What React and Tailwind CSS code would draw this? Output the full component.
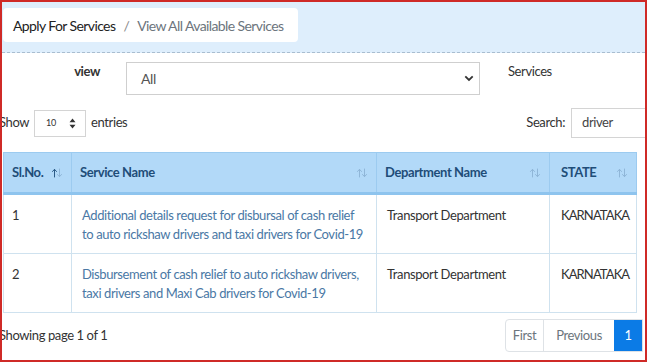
import React from "react";

const font = { fontFamily: "Lato, 'Open Sans', sans-serif" };

function SortIcon({ active }) {
  return (
    <svg width="12" height="10" viewBox="0 0 12 10" className="shrink-0">
      <g strokeWidth="1" fill="none" strokeLinecap="round" strokeLinejoin="round">
        <path d="M3.5 9V1.5M1.5 3.5L3.5 1.3L5.5 3.5" stroke={active ? "#2b5a86" : "#8fb6d8"} />
        <path d="M8.5 1V8.5M6.5 6.5L8.5 8.7L10.5 6.5" stroke="#8fb6d8" />
      </g>
    </svg>
  );
}

const rows = [
  {
    no: "1",
    name: "Additional details request for disbursal of cash relief to auto rickshaw drivers and taxi drivers for Covid-19",
    dept: "Transport Department",
    state: "KARNATAKA",
  },
  {
    no: "2",
    name: "Disbursement of cash relief to auto rickshaw drivers, taxi drivers and Maxi Cab drivers for Covid-19",
    dept: "Transport Department",
    state: "KARNATAKA",
  },
];

export default function App() {
  return (
    <div
      className="w-[647px] h-[362px] border-2 border-[#cf2a27] overflow-hidden bg-white text-[13px] tracking-[-0.4px] text-[#333]"
      style={font}
    >
      {/* breadcrumb band */}
      <div className="h-[51px] bg-[#deeefc] border-b border-dashed border-[#a9bdd0] pt-[6px] pl-[1px]">
        <div className="w-[295px] h-[34px] bg-white rounded-[4px] flex items-center pl-[10px] text-[14px] tracking-[-0.6px] whitespace-nowrap">
          <span className="text-[#222]">Apply For Services</span>
          <span className="text-[#888] mx-[8px]">/</span>
          <span className="text-[#6c757d]">View All Available Services</span>
        </div>
      </div>

      {/* filter row */}
      <div className="flex items-start mt-[9px]">
        <div className="w-[98px] text-right font-bold leading-[18px] text-[#333]">view</div>
        <div className="ml-[26px] w-[354px] h-[33px] border border-[#cfcfcf] flex items-center justify-between pl-[14px] pr-[5px] text-[14px] text-[#555]">
          <span>All</span>
          <svg width="10" height="7" viewBox="0 0 10 7">
            <path d="M1.3 1.3L5 5L8.7 1.3" stroke="#333" strokeWidth="1.8" fill="none" />
          </svg>
        </div>
        <div className="ml-[28px] leading-[18px] text-[#333]">Services</div>
      </div>

      {/* show / search row */}
      <div className="flex items-center justify-between mt-[13px] h-[30px]">
        <div className="flex items-center ml-[-3px]">
          <span>Show</span>
          <div className="ml-[5px] w-[52px] h-[27px] border border-[#d4d4d4] flex items-center justify-between pl-[11px] pr-[9px]">
            <span className="text-[9px] text-[#333]">10</span>
            <svg width="7" height="11" viewBox="0 0 7 11">
              <path d="M3.5 0.5L6.5 4.2H0.5Z M3.5 10.5L6.5 6.8H0.5Z" fill="#333" />
            </svg>
          </div>
          <span className="ml-[5px]">entries</span>
        </div>
        <div className="flex items-center mr-[-6px]">
          <span>Search:</span>
          <div className="ml-[6px] w-[80px] h-[30px] border border-[#d4d4d4] flex items-center pl-[10px] text-[#444]">
            driver
          </div>
        </div>
      </div>

      {/* table */}
      <table className="mt-[14px] ml-[1px] w-[633px] border-collapse table-fixed">
        <colgroup>
          <col className="w-[68px]" />
          <col className="w-[305px]" />
          <col className="w-[173px]" />
          <col className="w-[87px]" />
        </colgroup>
        <thead>
          <tr className="h-[41px] bg-[#b2d9f8] border-t border-[#9ccbf0] border-b-[3px] border-b-[#8ec4ee]">
            {[
              ["Sl.No.", true],
              ["Service Name", false],
              ["Department Name", false],
              ["STATE", false],
            ].map(([t, a]) => (
              <th
                key={t}
                className="border-x border-[#9ccbf0] px-[8px] text-left font-bold text-[#1f4d78]"
              >
                <div className="flex items-center justify-between">
                  <span className={t === "STATE" ? "ml-[3px]" : ""}>{t}</span>
                  <SortIcon active={a} />
                </div>
              </th>
            ))}
          </tr>
        </thead>
        <tbody>
          {rows.map((r, i) => (
            <tr key={r.no} className={i === 0 ? "h-[60px]" : "h-[59px]"}>
              <td className="border border-[#cfe2ef] align-top px-[8px] pt-[11px]">{r.no}</td>
              <td className="border border-[#cfe2ef] align-top px-[10px] pt-[11px] leading-[19px] text-[#4a78a5]">
                {r.name}
              </td>
              <td className="border border-[#cfe2ef] align-top px-[10px] pt-[11px] whitespace-nowrap">{r.dept}</td>
              <td className="border border-[#cfe2ef] align-top px-[11px] pt-[11px] whitespace-nowrap tracking-[-0.9px]">{r.state}</td>
            </tr>
          ))}
        </tbody>
      </table>

      {/* footer */}
      <div className="flex items-center justify-between mt-[6px]">
        <span className="ml-[-3px]">Showing page 1 of 1</span>
        <div className="flex h-[33px] border border-[#dee2e6] rounded-l-[4px] mr-[2px]">
          <div className="w-[38px] flex items-center justify-center text-[#6c757d] border-r border-[#dee2e6]">First</div>
          <div className="w-[70px] flex items-center justify-center text-[#6c757d]">Previous</div>
          <div className="w-[28px] flex items-center justify-center bg-[#0b7be6] text-white">1</div>
        </div>
      </div>
    </div>
  );
}
